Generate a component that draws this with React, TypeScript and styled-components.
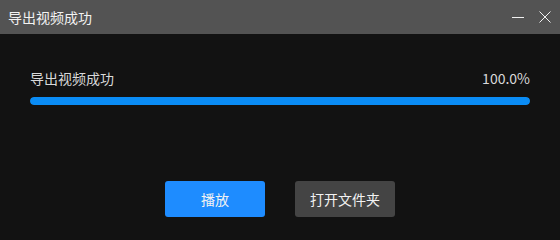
import React from 'react'
import styled, { createGlobalStyle } from 'styled-components'

const GlobalStyle = createGlobalStyle`
  html, body {
    margin: 0;
    padding: 0;
    background: #121212;
  }
  body {
    font-family: "Noto Sans CJK SC", "Liberation Sans", sans-serif;
  }
`

const Window = styled.div`
  width: 560px;
  height: 240px;
  display: flex;
  flex-direction: column;
  background: #121212;
  color: #e6e6e6;
`

const TitleBar = styled.div`
  height: 34px;
  flex: none;
  display: flex;
  align-items: center;
  justify-content: space-between;
  padding: 0 9px 0 8px;
  background: #535353;
`

const Title = styled.span`
  font-size: 14px;
  color: #f2f2f2;
`

const WinControls = styled.div`
  display: flex;
  align-items: center;
  gap: 15px;
`

const CtrlButton = styled.button`
  width: 12px;
  height: 12px;
  padding: 0;
  border: none;
  background: transparent;
  display: flex;
  align-items: center;
  justify-content: center;
  color: #f0f0f0;
  cursor: pointer;
`

const Content = styled.div`
  flex: 1;
  display: flex;
  flex-direction: column;
  padding: 33px 30px 23px;
`

const InfoRow = styled.div`
  display: flex;
  justify-content: space-between;
  align-items: center;
  font-size: 14px;
  line-height: 22px;
  color: #d9d9d9;
`

const Track = styled.div`
  margin-top: 8px;
  height: 8px;
  border-radius: 4px;
  background: #2a2a2a;
  overflow: hidden;
`

const Fill = styled.div`
  height: 100%;
  border-radius: 4px;
  background: #0a8cf5;
`

const Actions = styled.div`
  margin-top: auto;
  display: flex;
  justify-content: center;
  gap: 30px;
`

const Button = styled.button<{ $primary?: boolean }>`
  width: 100px;
  height: 36px;
  border: none;
  border-radius: 3px;
  font-family: inherit;
  font-size: 14px;
  color: #f2f2f2;
  background: ${p => (p.$primary ? '#1e8cff' : '#444444')};
  cursor: pointer;
`

export default function App() {
  const progress = 100
  return (
    <Window>
      <GlobalStyle />
      <TitleBar>
        <Title>导出视频成功</Title>
        <WinControls>
          <CtrlButton aria-label="minimize">
            <svg width="12" height="12" viewBox="0 0 12 12">
              <path d="M0 6.5h12" stroke="currentColor" strokeWidth="1" />
            </svg>
          </CtrlButton>
          <CtrlButton aria-label="close">
            <svg width="12" height="12" viewBox="0 0 12 12">
              <path d="M0.5 0.5l11 11M11.5 0.5l-11 11" stroke="currentColor" strokeWidth="1" />
            </svg>
          </CtrlButton>
        </WinControls>
      </TitleBar>
      <Content>
        <InfoRow>
          <span>导出视频成功</span>
          <span>{progress.toFixed(1)}%</span>
        </InfoRow>
        <Track>
          <Fill style={{ width: `${progress}%` }} />
        </Track>
        <Actions>
          <Button $primary>播放</Button>
          <Button>打开文件夹</Button>
        </Actions>
      </Content>
    </Window>
  )
}
